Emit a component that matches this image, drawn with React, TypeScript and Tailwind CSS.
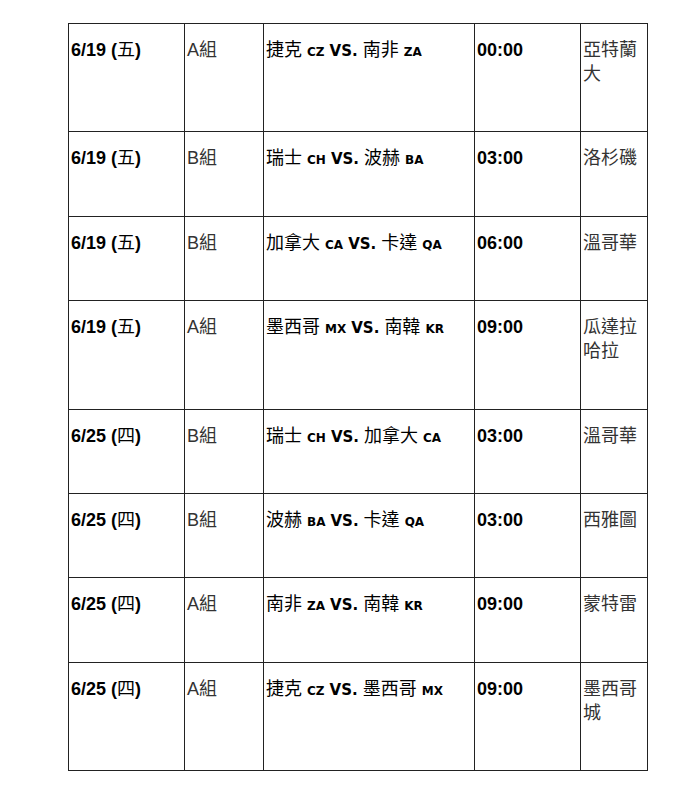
import React from "react"

type Match = {
  day: string
  wd: string
  group: string
  home: string
  homeCode: string
  away: string
  awayCode: string
  time: string
  city: string
}

const matches: Match[] = [
  { day: "6/19", wd: "五", group: "A", home: "捷克", homeCode: "CZ", away: "南非", awayCode: "ZA", time: "00:00", city: "亞特蘭大" },
  { day: "6/19", wd: "五", group: "B", home: "瑞士", homeCode: "CH", away: "波赫", awayCode: "BA", time: "03:00", city: "洛杉磯" },
  { day: "6/19", wd: "五", group: "B", home: "加拿大", homeCode: "CA", away: "卡達", awayCode: "QA", time: "06:00", city: "溫哥華" },
  { day: "6/19", wd: "五", group: "A", home: "墨西哥", homeCode: "MX", away: "南韓", awayCode: "KR", time: "09:00", city: "瓜達拉哈拉" },
  { day: "6/25", wd: "四", group: "B", home: "瑞士", homeCode: "CH", away: "加拿大", awayCode: "CA", time: "03:00", city: "溫哥華" },
  { day: "6/25", wd: "四", group: "B", home: "波赫", homeCode: "BA", away: "卡達", awayCode: "QA", time: "03:00", city: "西雅圖" },
  { day: "6/25", wd: "四", group: "A", home: "南非", homeCode: "ZA", away: "南韓", awayCode: "KR", time: "09:00", city: "蒙特雷" },
  { day: "6/25", wd: "四", group: "A", home: "捷克", homeCode: "CZ", away: "墨西哥", awayCode: "MX", time: "09:00", city: "墨西哥城" },
]

const cell = "border border-[#222] align-top pl-[2px] pr-[2px] pt-[14px] pb-[45.4px] text-[18px] leading-[24px]"
const cjk = "font-normal leading-none"
const code = "font-['DejaVu_Sans'] text-[12px] leading-none font-bold"

export default function App() {
  return (
    <div
      className="min-h-screen bg-white pt-[23px] pl-[68px] text-[#222]"
      style={{ fontFamily: '"Liberation Sans", Arial, "Noto Sans CJK TC", sans-serif' }}
    >
      <table className="table-fixed border-collapse w-[579px]">
        <colgroup>
          <col className="w-[116px]" />
          <col className="w-[79px]" />
          <col className="w-[211px]" />
          <col className="w-[106px]" />
          <col className="w-[67px]" />
        </colgroup>
        <tbody>
          {matches.map((m, i) => (
            <tr key={i}>
              <td className={cell + " font-bold text-black"}>
                {m.day} (<span className={cjk}>{m.wd}</span>)
              </td>
              <td className={cell + " text-[#333]"}>
                {m.group}<span className={cjk}>組</span>
              </td>
              <td className={cell + " text-black whitespace-nowrap"}>
                <span className={cjk}>{m.home}</span> <span className={code}>{m.homeCode}</span>{" "}
                <span className="font-['DejaVu_Sans'] text-[15px] leading-none font-bold">VS.</span>{" "}
                <span className={cjk}>{m.away}</span> <span className={code}>{m.awayCode}</span>
              </td>
              <td className={cell + " font-bold text-black"}>{m.time}</td>
              <td className={cell + " text-[#333] break-all"}>{m.city}</td>
            </tr>
          ))}
        </tbody>
      </table>
    </div>
  )
}
